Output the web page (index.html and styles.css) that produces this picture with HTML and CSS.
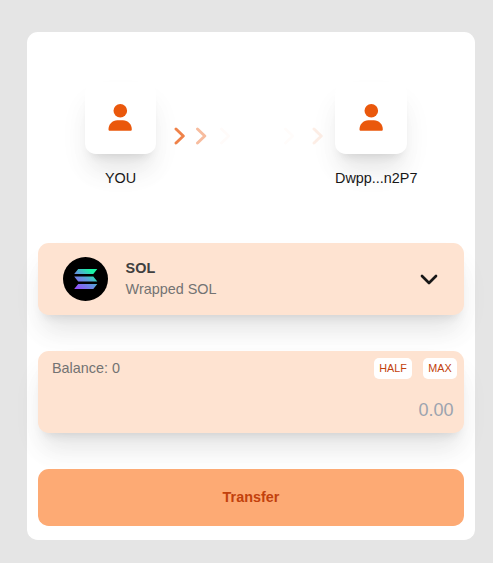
FILE: index.html
```html
<!DOCTYPE html>
<html lang="en">
<head>
<meta charset="utf-8">
<title>Transfer</title>
<link rel="stylesheet" href="styles.css">
</head>
<body>
<main class="card">
  <section class="parties">
    <div class="party">
      <div class="avatar">
        <svg class="person" viewBox="0 0 24 28"><circle cx="12.3" cy="6.800" r="6.800"/><path d="M.5 25.200C.5 20.200 4.400 16.200 9.400 16.200h5.500c5 0 8.900 4 8.900 9 0 1-.5 1.600-1.400 1.600H1.900C1 26.800.5 26.200.5 25.200z"/></svg>
      </div>
      <span class="name">YOU</span>
    </div>
    <svg class="arrows" viewBox="0 0 179 20">
      <path d="M20 4l7.300 7L20 18" opacity=".75"/>
      <path d="M41.500 4l7.300 7L41.500 18" opacity=".4"/>
      <path d="M65.500 4l7.300 7L65.500 18" opacity=".025"/>
      <path d="M129.500 4l7.300 7L129.500 18" opacity=".02"/>
      <path d="M158 4l7.300 7L158 18" opacity=".1"/>
    </svg>
    <div class="party">
      <div class="avatar">
        <svg class="person" viewBox="0 0 24 28"><circle cx="12.3" cy="6.800" r="6.800"/><path d="M.5 25.200C.5 20.200 4.400 16.200 9.400 16.200h5.500c5 0 8.900 4 8.900 9 0 1-.5 1.600-1.400 1.600H1.900C1 26.800.5 26.200.5 25.200z"/></svg>
      </div>
      <span class="name">Dwpp...n2P7</span>
    </div>
  </section>
  <section class="panel token">
    <svg class="logo" viewBox="0 0 45 44">
      <defs><linearGradient id="sol" gradientUnits="userSpaceOnUse" x1="13" y1="33" x2="30" y2="10"><stop offset="0" stop-color="#9945ff"/><stop offset=".5" stop-color="#5f98dc"/><stop offset=".85" stop-color="#19f5a5"/></linearGradient></defs>
      <ellipse cx="22.500" cy="22" rx="22.500" ry="22"/>
      <path fill="url(#sol)" d="M15.200 12h19.100l-4 5H11.200zM11.200 19.600h19.100l4 5H15.200zM15.200 27h19.100l-4 5H11.200z"/>
    </svg>
    <div class="token-text"><strong>SOL</strong><span>Wrapped SOL</span></div>
    <svg class="chevron" viewBox="0 0 18 12"><path d="M2 3l7 7 7-7"/></svg>
  </section>
  <section class="panel amount">
    <div class="amount-head">
      <span>Balance: 0</span>
      <button class="chip half">HALF</button>
      <button class="chip">MAX</button>
    </div>
    <div class="value">0.00</div>
  </section>
  <button class="transfer">Transfer</button>
</main>
</body>
</html>
```

FILE: styles.css
```css
* { box-sizing: border-box; }
body {
  margin: 0;
  padding: 32px 18px 23px 27px;
  background: #e5e5e5;
  color: #171717;
  font: 14.4px/21.6px "Liberation Sans", Arial, sans-serif;
}
button { border: 0; margin: 0; font-family: inherit; }
.card {
  height: 508px;
  padding: 11px 11px 14px;
  border-radius: 10.8px;
  background: #fff;
}
.parties { display: flex; height: 200px; padding: 39px 0 0 47px; }
.party { width: 71px; display: flex; flex-direction: column; align-items: center; }
.party:last-child { width: 72px; align-items: flex-start; }
.avatar {
  width: 100%;
  height: 72px;
  padding: 22px 24px 0 23px;
  border-radius: 10.8px;
  background: #fff;
}
.party:last-child .avatar { padding-left: 24px; }
.avatar, .panel {
  box-shadow: 0 20px 25px -5px rgba(0,0,0,.08), 0 8px 10px -6px rgba(0,0,0,.1), 0 18px 36px rgba(0,0,0,.03);
}
.person { display: block; width: 24px; height: 28px; fill: #ea580c; }
.name { margin-top: 14px; white-space: nowrap; }
.arrows {
  width: 179px;
  height: 20px;
  margin-top: 43px;
  fill: none;
  stroke: #ea580c;
  stroke-width: 2.9;
  stroke-linecap: round;
  stroke-linejoin: round;
}
.panel { border-radius: 10.8px; background: #fee3d1; }
.token { height: 72px; display: flex; align-items: center; padding: 0 26px 0 25px; }
.logo { width: 45px; height: 44px; }
.token-text { display: flex; flex-direction: column; flex: 1; margin-left: 17.6px; line-height: 21px; color: #737373; }
.token-text strong { color: #404040; }
.chevron { width: 18px; height: 12px; fill: none; stroke: #171717; stroke-width: 2.7; stroke-linecap: round; stroke-linejoin: round; }
.amount { height: 82px; margin-top: 36px; padding: 7px 7px 0 14px; }
.amount-head { display: flex; color: #737373; }
.amount-head span { flex: 1; }
.chip {
  width: 34px;
  height: 21px;
  padding: 0;
  border-radius: 5px;
  background: #fff;
  color: #c2410c;
  font-size: 10.8px;
  line-height: 21px;
}
.half { width: 38px; margin-right: 11px; }
.value { margin-top: 17px; padding-right: 3.5px; text-align: right; font-size: 18px; line-height: 27px; color: #9ca3af; }
.transfer {
  display: block;
  width: 100%;
  height: 57px;
  margin-top: 36px;
  padding: 0 0 2px;
  border-radius: 10.8px;
  background: #fdaa74;
  color: #c2410c;
  font-size: 14.4px;
  font-weight: 700;
}
```
